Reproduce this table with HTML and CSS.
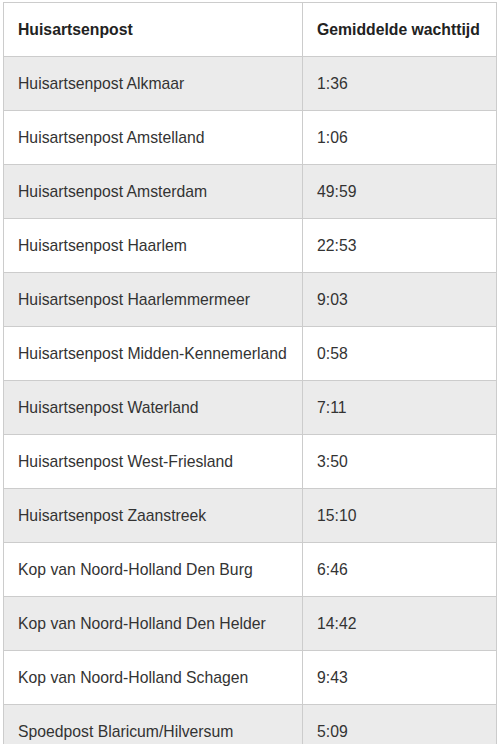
FILE: index.html
```html
<!DOCTYPE html>
<html>
<head>
<meta charset="utf-8">
<link rel="stylesheet" href="styles.css">
</head>
<body>
<table class="wait-table">
  <thead>
    <tr><th class="col-name">Huisartsenpost</th><th class="col-time">Gemiddelde wachttijd</th></tr>
  </thead>
  <tbody>
    <tr><td>Huisartsenpost Alkmaar</td><td>1:36</td></tr>
    <tr><td>Huisartsenpost Amstelland</td><td>1:06</td></tr>
    <tr><td>Huisartsenpost Amsterdam</td><td>49:59</td></tr>
    <tr><td>Huisartsenpost Haarlem</td><td>22:53</td></tr>
    <tr><td>Huisartsenpost Haarlemmermeer</td><td>9:03</td></tr>
    <tr><td>Huisartsenpost Midden-Kennemerland</td><td>0:58</td></tr>
    <tr><td>Huisartsenpost Waterland</td><td>7:11</td></tr>
    <tr><td>Huisartsenpost West-Friesland</td><td>3:50</td></tr>
    <tr><td>Huisartsenpost Zaanstreek</td><td>15:10</td></tr>
    <tr><td>Kop van Noord-Holland Den Burg</td><td>6:46</td></tr>
    <tr><td>Kop van Noord-Holland Den Helder</td><td>14:42</td></tr>
    <tr><td>Kop van Noord-Holland Schagen</td><td>9:43</td></tr>
    <tr><td>Spoedpost Blaricum/Hilversum</td><td>5:09</td></tr>
  </tbody>
</table>
</body>
</html>
```
FILE: styles.css
```css
html, body {
  margin: 0;
  padding: 0;
  background: #fff;
}
body {
  padding: 2px 0 0 3px;
  font-family: "Liberation Sans", Arial, sans-serif;
  color: #333;
}
.wait-table {
  border-collapse: collapse;
  table-layout: fixed;
  width: 493px;
  font-size: 15.75px;
}
.wait-table th,
.wait-table td {
  border: 1px solid #ccc;
  height: 54px;
  box-sizing: border-box;
  padding: 0 14px;
  text-align: left;
  vertical-align: middle;
  line-height: 20px;
  white-space: nowrap;
}
.wait-table th {
  font-weight: bold;
  color: #222;
}
.col-name { width: 299px; }
.col-time { width: 194px; }
.wait-table tbody tr:nth-child(odd) td {
  background: #ebebeb;
}
```
